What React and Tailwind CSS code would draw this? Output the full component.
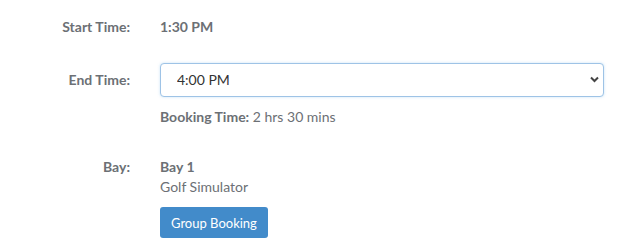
export default function App() {
  return (
    <div className="min-h-screen bg-white font-['Lato','Open_Sans',sans-serif] text-[14px] leading-[20px] text-[#6c7075]">
      <div className="w-[604px] pt-[17px]">
        {/* Start time */}
        <div className="grid grid-cols-[130px_1fr] gap-x-[30px]">
          <div className="text-right font-bold">Start Time:</div>
          <div className="font-bold">1:30 PM</div>
        </div>

        {/* End time */}
        <div className="mt-[26px] grid grid-cols-[130px_1fr] gap-x-[30px]">
          <div className="pt-[7px] text-right font-bold">End Time:</div>
          <div>
            <div className="relative">
              <select
                defaultValue="4:00 PM"
                className="h-[34px] w-full appearance-none rounded-[4px] border border-[#9ec3e6] bg-white pl-[16px] pr-8 text-[14px] text-[#333] outline-none shadow-[0_0_3px_rgba(102,175,233,0.35)]"
              >
                <option>3:30 PM</option>
                <option>4:00 PM</option>
                <option>4:30 PM</option>
              </select>
              <svg
                className="pointer-events-none absolute right-[5px] top-[13px]"
                width="9"
                height="7"
                viewBox="0 0 9 7"
              >
                <path d="M1 1.5 L4.5 5 L8 1.5" fill="none" stroke="#444" strokeWidth="2" />
              </svg>
            </div>
            <div className="mt-[10px]">
              <span className="font-bold">Booking Time:</span> 2 hrs 30 mins
            </div>
          </div>
        </div>

        {/* Bay */}
        <div className="mt-[30px] grid grid-cols-[130px_1fr] gap-x-[30px]">
          <div className="text-right font-bold">Bay:</div>
          <div>
            <div className="font-bold">Bay 1</div>
            <div>Golf Simulator</div>
            <button className="mt-[10px] h-[31px] rounded-[3px] bg-[#428bca] px-[11px] text-[13px] text-white">
              Group Booking
            </button>
          </div>
        </div>
      </div>
    </div>
  );
}
